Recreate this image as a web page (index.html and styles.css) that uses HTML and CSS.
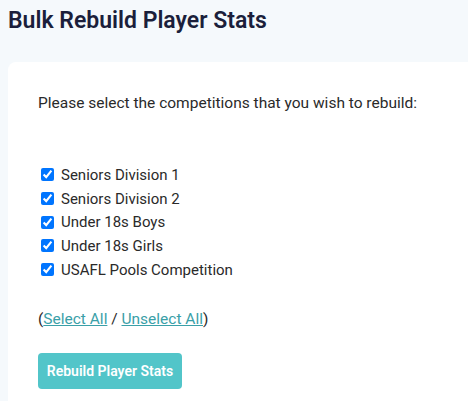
FILE: index.html
```html
<!DOCTYPE html>
<html>
<head>
<meta charset="utf-8">
<link rel="stylesheet" href="styles.css">
</head>
<body>
<h1 class="title">Bulk Rebuild Player Stats</h1>
<div class="card">
  <p class="intro">Please select the competitions that you wish to rebuild:</p>
  <ul class="list">
    <li><label><input type="checkbox" checked> Seniors Division 1</label></li>
    <li><label><input type="checkbox" checked> Seniors Division 2</label></li>
    <li><label><input type="checkbox" checked> Under 18s Boys</label></li>
    <li><label><input type="checkbox" checked> Under 18s Girls</label></li>
    <li><label><input type="checkbox" checked> USAFL Pools Competition</label></li>
  </ul>
  <p class="links">(<a href="#">Select All</a> / <a href="#">Unselect All</a>)</p>
  <button class="btn">Rebuild Player Stats</button>
</div>
</body>
</html>
```
FILE: styles.css
```css
html, body { margin: 0; padding: 0; }
body {
  background: #f5f9fc;
  font-family: Roboto, "Liberation Sans", sans-serif;
  color: #2a2a2a;
  padding: 8px 0 0 8px;
  height: 100vh;
  box-sizing: border-box;
  overflow: hidden;
  display: flex;
  flex-direction: column;
}
.title {
  margin: 0;
  font-size: 23px;
  font-weight: 600;
  color: #1b1f3b;
  line-height: 26px;
}
.card {
  margin-top: 28px;
  background: #fff;
  border-radius: 8px 0 0 0;
  padding: 32px 30px 0 30px;
  flex: 1;
}
.intro {
  margin: 0;
  font-size: 15.5px;
  line-height: 18px;
}
.list {
  list-style: none;
  margin: 51px 0 0 0;
  padding: 0;
  font-size: 15px;
}
.list li {
  height: 23.7px;
  display: flex;
  align-items: center;
}
.list label { display: flex; align-items: center; }
.list input {
  margin: 0 7px 0 3px;
  width: 13px;
  height: 13px;
  accent-color: #0075ff;
}
.links {
  margin: 29px 0 0 0;
  font-size: 15.5px;
}
.links a { color: #3aa0a8; }
.btn {
  display: block;
  margin-top: 25px;
  background: #52c5c9;
  color: #fff;
  border: none;
  border-radius: 4px;
  font-family: inherit;
  font-weight: 600;
  font-size: 14px;
  width: 144px;
  height: 36px;
  padding: 0;
}
```
